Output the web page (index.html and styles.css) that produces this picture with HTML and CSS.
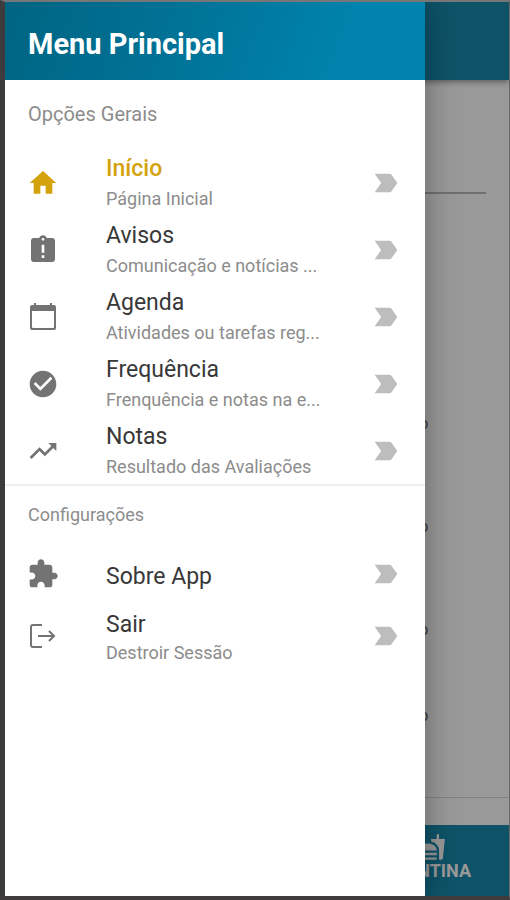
FILE: index.html
```html
<!DOCTYPE html>
<html lang="pt-BR">

<head>
    <meta charset="UTF-8" />
    <meta name="viewport" content="width=device-width, initial-scale=1" />
    <title>Menu Principal</title>
    <link rel="stylesheet" href="styles.css">
</head>

<body>
    <svg class="sprite" aria-hidden="true">
        <symbol id="arrow" viewBox="0 0 24 24">
            <path d="M3.5 19h11c.67 0 1.27-.33 1.63-.84L20.5 12l-4.37-6.16c-.36-.51-.96-.84-1.63-.84h-11L8.34 12z" />
        </symbol>
    </svg>

    <div class="screen">
        <!-- página por trás do menu -->
        <div class="page">
            <header class="page-header"></header>
            <main class="page-content">
                <hr class="field-line">
                <ul class="page-list">
                    <li>o</li>
                    <li>o</li>
                    <li>o</li>
                    <li>o</li>
                </ul>
            </main>
            <footer class="tabs">
                <button class="tab" type="button">
                    <svg viewBox="0 0 24 24" aria-hidden="true">
                        <path d="M18.06 22.99h1.66c.84 0 1.53-.64 1.63-1.46L23 5.05h-5V1h-1.97v4.05h-4.97l.3 2.34c1.71.47 3.31 1.32 4.27 2.26 1.44 1.42 2.43 2.89 2.43 5.29v8.05zM1 21.99V21h15.03v.99c0 .55-.45 1-1.01 1H2.01c-.56 0-1.01-.45-1.01-1zm15.03-7c0-8-15.03-8-15.03 0h15.03zM1.02 17h15v2h-15z" />
                    </svg>
                    CANTINA
                </button>
            </footer>
        </div>
        <div class="backdrop"></div>

        <!-- menu lateral -->
        <aside class="drawer">
            <h1 class="drawer-title">Menu Principal</h1>
            <nav>
                <section class="group">
                    <h2>Opções Gerais</h2>
                    <a class="item active" href="#inicio">
                        <svg class="icon" viewBox="0 0 24 24" aria-hidden="true">
                            <path d="M10 20v-6h4v6h5v-8h3L12 3 2 12h3v8z" />
                        </svg>
                        <span class="text"><strong>Início</strong><small>Página Inicial</small></span>
                        <svg class="arrow" aria-hidden="true"><use href="#arrow" /></svg>
                    </a>
                    <a class="item" href="#avisos">
                        <svg class="icon" viewBox="0 0 24 24" aria-hidden="true">
                            <path d="M19 3h-4.18C14.4 1.84 13.3 1 12 1s-2.4.84-2.82 2H5c-1.1 0-2 .9-2 2v14c0 1.1.9 2 2 2h14c1.1 0 2-.9 2-2V5c0-1.1-.9-2-2-2zm-6 15h-2v-2h2v2zm0-4h-2V8h2v6zm-1-9c-.55 0-1-.45-1-1s.45-1 1-1 1 .45 1 1-.45 1-1 1z" />
                        </svg>
                        <span class="text"><strong>Avisos</strong><small>Comunicação e notícias ...</small></span>
                        <svg class="arrow" aria-hidden="true"><use href="#arrow" /></svg>
                    </a>
                    <a class="item" href="#agenda">
                        <svg class="icon" viewBox="0 0 32 32" aria-hidden="true">
                            <path fill-rule="evenodd" d="M7 2h2v2h14V2h2v2h2q2 0 2 2v21q0 2-2 2H5q-2 0-2-2V6q0-2 2-2h2zM5 10v16q0 1 1 1h20q1 0 1-1V10z" />
                        </svg>
                        <span class="text"><strong>Agenda</strong><small>Atividades ou tarefas reg...</small></span>
                        <svg class="arrow" aria-hidden="true"><use href="#arrow" /></svg>
                    </a>
                    <a class="item" href="#frequencia">
                        <svg class="icon" viewBox="0 0 24 24" aria-hidden="true">
                            <path d="M12 2C6.48 2 2 6.48 2 12s4.48 10 10 10 10-4.48 10-10S17.52 2 12 2zm-2 15l-5-5 1.41-1.41L10 14.17l7.59-7.59L19 8l-9 9z" />
                        </svg>
                        <span class="text"><strong>Frequência</strong><small>Frenquência e notas na e...</small></span>
                        <svg class="arrow" aria-hidden="true"><use href="#arrow" /></svg>
                    </a>
                    <a class="item" href="#notas">
                        <svg class="icon" viewBox="0 0 24 24" aria-hidden="true">
                            <path d="M16 6l2.29 2.29-4.88 4.88-4-4L2 16.59 3.41 18l6-6 4 4 6.3-6.29L22 12V6z" />
                        </svg>
                        <span class="text"><strong>Notas</strong><small>Resultado das Avaliações</small></span>
                        <svg class="arrow" aria-hidden="true"><use href="#arrow" /></svg>
                    </a>
                </section>

                <section class="group settings">
                    <h2>Configurações</h2>
                    <a class="item" href="#sobre">
                        <svg class="icon" viewBox="0 0 24 24" aria-hidden="true">
                            <path d="M20.5 11H19V7c0-1.1-.9-2-2-2h-4V3.5C13 2.12 11.88 1 10.5 1S8 2.12 8 3.5V5H4c-1.1 0-1.99.9-1.99 2v3.8H3.5c1.49 0 2.7 1.21 2.7 2.7s-1.21 2.7-2.7 2.7H2V20c0 1.1.9 2 2 2h3.8v-1.5c0-1.49 1.21-2.7 2.7-2.7 1.49 0 2.7 1.21 2.7 2.7V22H17c1.1 0 2-.9 2-2v-4h1.5c1.38 0 2.5-1.12 2.5-2.5S21.88 11 20.5 11z" />
                        </svg>
                        <span class="text"><strong>Sobre App</strong></span>
                        <svg class="arrow" aria-hidden="true"><use href="#arrow" /></svg>
                    </a>
                    <a class="item" href="#sair">
                        <svg class="icon line" viewBox="0 0 32 32" aria-hidden="true">
                            <path d="M15 5H6q-2 0-2 2v18q0 2 2 2h9M11 16h16M22 11l5 5-5 5" />
                        </svg>
                        <span class="text"><strong>Sair</strong><small>Destroir Sessão</small></span>
                        <svg class="arrow" aria-hidden="true"><use href="#arrow" /></svg>
                    </a>
                </section>
            </nav>
        </aside>
    </div>
</body>

</html>
```
FILE: styles.css
```css
:root {
    --frame: #3d3b3c;
    --blue-dark: #006482;
    --blue: #0083ae;
    --gold: #d3a20c;
    --text: #383838;
    --muted: #8c8c8c;
    --icon: #737373;
    --arrow: #bdbdbd
}

* {
    box-sizing: border-box
}

body {
    margin: 0;
    font-family: Roboto, "Liberation Sans", sans-serif;
    background: var(--frame);
    color: var(--text)
}

.sprite {
    display: none
}

.screen {
    position: relative;
    display: flex;
    min-height: 100vh;
    border: solid var(--frame);
    border-width: 2px 1px 4px 5px;
    border-top-color: #777;
    border-right-color: #666;
    overflow: hidden
}

/* página */
.page {
    flex: 1;
    display: flex;
    flex-direction: column;
    background: #fff
}

.page-header {
    height: 78px;
    background: #188aad;
    box-shadow: 0 2px 6px rgba(0, 0, 0, .4)
}

.page-content {
    flex: 1;
    border-bottom: 1px solid #d8d8d8
}

.field-line {
    margin: 112px 23px 0;
    border: 0;
    border-top: 2px solid #bbb
}

.page-list {
    width: 84%;
    margin: 220px 0 0;
    padding: 0;
    list-style: none;
    font-size: 16px;
    line-height: 20px;
    text-align: right;
    color: #666
}

.page-list li + li {
    margin-top: 83px
}

.page-list li:last-child {
    margin-top: 66px
}

.tabs {
    display: flex;
    justify-content: flex-end;
    margin-top: 27px;
    padding: 8px 38px 15px;
    background: #188aad
}

.tab {
    display: flex;
    flex-direction: column;
    align-items: center;
    padding: 0;
    border: 0;
    background: none;
    color: #fff;
    font: 700 18px/20px Roboto, sans-serif
}

.tab svg {
    width: 28px;
    height: 28px;
    fill: currentColor
}

.backdrop {
    position: absolute;
    inset: 0;
    background: rgba(0, 0, 0, .4)
}

/* menu */
.drawer {
    position: absolute;
    inset: 0 auto 0 0;
    width: 83.3333%;
    background: #fff;
    box-shadow: 0 0 30px rgba(0, 0, 0, .35)
}

.drawer-title {
    margin: 0;
    padding: 6px 23px 0;
    font-size: 29px;
    font-weight: 700;
    line-height: 72px;
    color: #fff;
    background: linear-gradient(110deg, var(--blue-dark), #007499 45%, var(--blue) 80%)
}

.group h2 {
    margin: 0;
    padding: 0 23px;
    font-size: 20px;
    font-weight: 400;
    line-height: 69px;
    color: var(--muted)
}

.item {
    display: flex;
    align-items: center;
    gap: 47px;
    height: 67px;
    padding: 0 23px 0 22px;
    color: inherit;
    text-decoration: none
}

.icon,
.arrow {
    flex: none;
    width: 32px;
    height: 32px;
    fill: var(--icon)
}

.icon.line {
    fill: none;
    stroke: var(--icon);
    stroke-width: 2
}

.arrow {
    fill: var(--arrow)
}

.text {
    flex: 1;
    min-width: 0;
    padding-top: 5px
}

.text strong,
.text small {
    display: block;
    overflow: hidden;
    white-space: nowrap;
    text-overflow: ellipsis
}

.text strong {
    font-size: 23px;
    font-weight: 400;
    line-height: 28px
}

.text small {
    font-size: 18px;
    line-height: 32px;
    color: var(--muted)
}

.active strong {
    font-weight: 500;
    color: var(--gold)
}

.active .icon {
    fill: var(--gold)
}

.settings {
    border-top: 2px solid #ededed
}

.settings h2 {
    font-size: 18px;
    line-height: 57px
}

.settings .item {
    height: 62px
}

.settings small {
    line-height: 28px
}
```
